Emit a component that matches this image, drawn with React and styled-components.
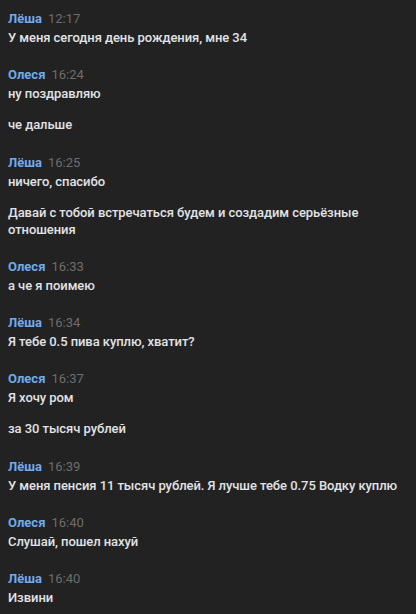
import React from "react";
import styled, { createGlobalStyle } from "styled-components";

const Global = createGlobalStyle`
  html, body { margin: 0; padding: 0; background: #222222; }
  body { font-family: Roboto, "Noto Sans", sans-serif; -webkit-font-smoothing: antialiased; }
`;

const Feed = styled.div`
  display: flex;
  flex-direction: column;
  gap: 21.3px;
  padding: 11px 8px 12px 8px;
  background: #222222;
  min-height: 614px;
  box-sizing: border-box;
`;

const Group = styled.div`
  display: flex;
  flex-direction: column;
`;

const Header = styled.div`
  display: flex;
  align-items: baseline;
  gap: 6px;
  height: 16px;
  line-height: 16px;
  margin-bottom: 2px;
`;

const Name = styled.span`
  color: #71aaeb;
  font-size: 13px;
  font-weight: 700;
`;

const Time = styled.span`
  color: #6d6d6d;
  font-size: 13px;
  font-weight: 400;
`;

const Messages = styled.div`
  display: flex;
  flex-direction: column;
  gap: 14px;
`;

const Text = styled.div`
  color: #e1e3e6;
  font-size: 13px;
  font-weight: 500;
  line-height: 17px;
  letter-spacing: -0.06px;
`;

const data = [
  { name: "Лёша", time: "12:17", msgs: ["У меня сегодня день рождения, мне 34"] },
  { name: "Олеся", time: "16:24", msgs: ["ну поздравляю", "че дальше"] },
  { name: "Лёша", time: "16:25", msgs: ["ничего, спасибо", "Давай с тобой встречаться будем и создадим серьёзные отношения"] },
  { name: "Олеся", time: "16:33", msgs: ["а че я поимею"] },
  { name: "Лёша", time: "16:34", msgs: ["Я тебе 0.5 пива куплю, хватит?"] },
  { name: "Олеся", time: "16:37", msgs: ["Я хочу ром", "за 30 тысяч рублей"] },
  { name: "Лёша", time: "16:39", msgs: ["У меня пенсия 11 тысяч рублей. Я лучше тебе 0.75 Водку куплю"] },
  { name: "Олеся", time: "16:40", msgs: ["Слушай, пошел нахуй"] },
  { name: "Лёша", time: "16:40", msgs: ["Извини"] },
];

export default function App() {
  return (
    <>
      <Global />
      <Feed>
        {data.map((g, i) => (
          <Group key={i}>
            <Header>
              <Name>{g.name}</Name>
              <Time>{g.time}</Time>
            </Header>
            <Messages>
              {g.msgs.map((m, j) => (
                <Text key={j}>{m}</Text>
              ))}
            </Messages>
          </Group>
        ))}
      </Feed>
    </>
  );
}
